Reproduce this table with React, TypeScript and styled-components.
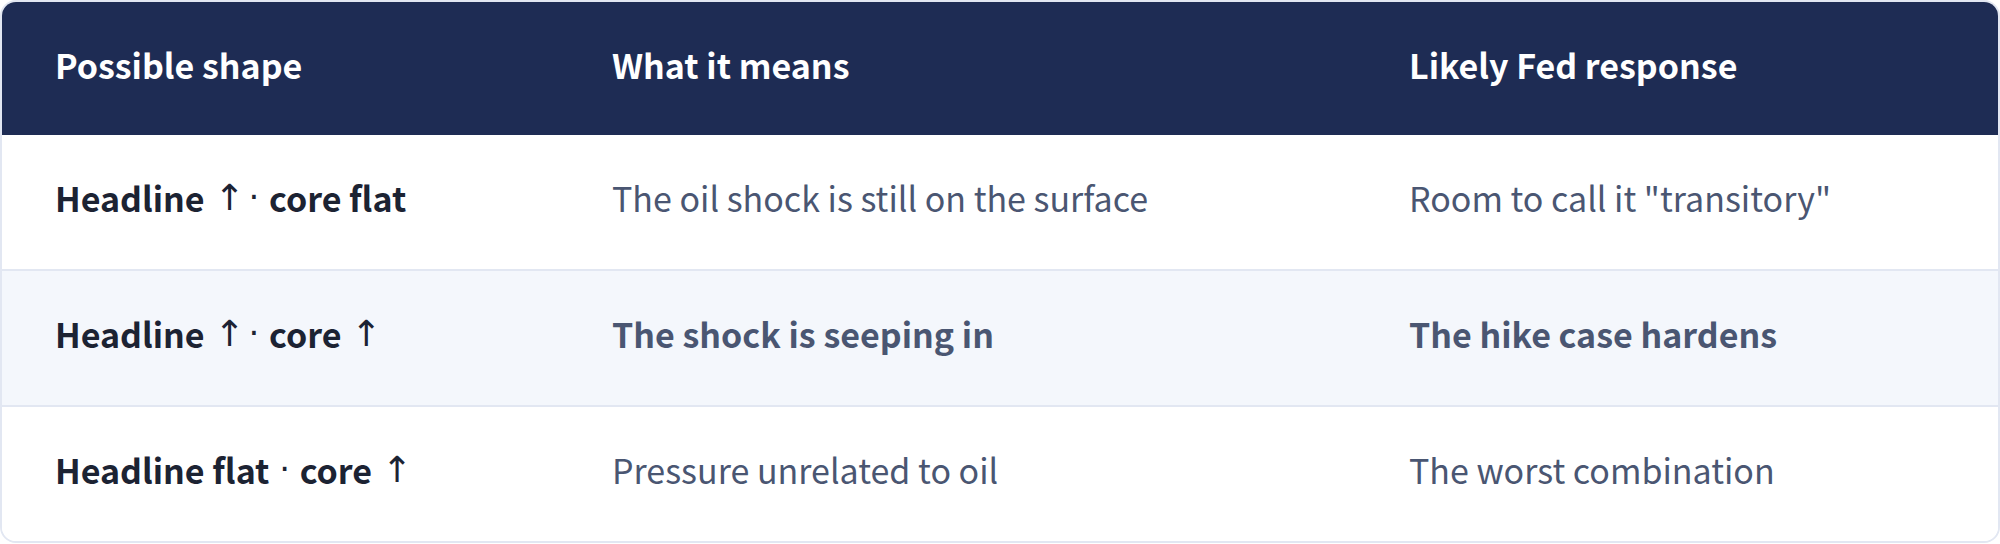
import styled, { createGlobalStyle } from 'styled-components';

interface Row {
  shape: string;
  meaning: string;
  response: string;
  emphasis?: boolean;
}

const ROWS: Row[] = [
  {
    shape: 'Headline ↑ · core flat',
    meaning: 'The oil shock is still on the surface',
    response: 'Room to call it "transitory"',
  },
  {
    shape: 'Headline ↑ · core ↑',
    meaning: 'The shock is seeping in',
    response: 'The hike case hardens',
    emphasis: true,
  },
  {
    shape: 'Headline flat · core ↑',
    meaning: 'Pressure unrelated to oil',
    response: 'The worst combination',
  },
];

// arrows and middle dots come from a lighter symbol face, as in the design
function withSymbols(text: string) {
  return text.split(/([↑·])/).map((part, i) =>
    part === '↑' || part === '·' ? (
      <Symbol key={i} $arrow={part === '↑'}>
        {part}
      </Symbol>
    ) : (
      part
    )
  );
}

const GlobalStyle = createGlobalStyle`
  html, body {
    margin: 0;
    padding: 0;
    background: #ffffff;
  }

  body {
    font-family: "Noto Sans CJK KR", "Noto Sans", sans-serif;
  }
`;

export default function App() {
  return (
    <>
      <GlobalStyle />
      <TableCard>
        <HeaderRow>
          <HeaderCell>Possible shape</HeaderCell>
          <HeaderCell>What it means</HeaderCell>
          <HeaderCell>Likely Fed response</HeaderCell>
        </HeaderRow>
        {ROWS.map((row) => (
          <BodyRow key={row.shape} $highlight={row.emphasis}>
            <ShapeCell>{withSymbols(row.shape)}</ShapeCell>
            <TextCell $bold={row.emphasis}>{row.meaning}</TextCell>
            <TextCell $bold={row.emphasis}>{row.response}</TextCell>
          </BodyRow>
        ))}
      </TableCard>
    </>
  );
}

const TableCard = styled.div`
  box-sizing: border-box;
  width: 2000px;
  border: 2px solid #e2e7f2;
  border-radius: 16px;
  overflow: hidden;
  background: #ffffff;
`;

const Columns = styled.div`
  display: grid;
  grid-template-columns: 557px 797px 1fr;
`;

const HeaderRow = styled(Columns)`
  height: 133px;
  background: #1e2c54;
`;

const BodyRow = styled(Columns)<{ $highlight?: boolean }>`
  height: 134px;
  background: ${(p) => (p.$highlight ? '#f4f7fc' : '#ffffff')};
  border-bottom: 2px solid #e2e7f2;

  &:last-child {
    border-bottom: none;
  }
`;

const Cell = styled.div`
  display: flex;
  align-items: center;
  box-sizing: border-box;
  padding: 0 53px 8px;
  font-size: 34px;
  line-height: 1.4;
  white-space: pre;
`;

const HeaderCell = styled(Cell)`
  color: #ffffff;
  font-weight: 700;
`;

const ShapeCell = styled(Cell)`
  color: #1c2333;
  font-weight: 700;
`;

const TextCell = styled(Cell)<{ $bold?: boolean }>`
  color: #4a5672;
  font-weight: ${(p) => (p.$bold ? 700 : 400)};
`;

const Symbol = styled.span<{ $arrow?: boolean }>`
  font-family: "DejaVu Sans", sans-serif;
  font-weight: 400;
  font-size: ${(p) => (p.$arrow ? '36px' : '34px')};
  padding: 0 2px;
`;
